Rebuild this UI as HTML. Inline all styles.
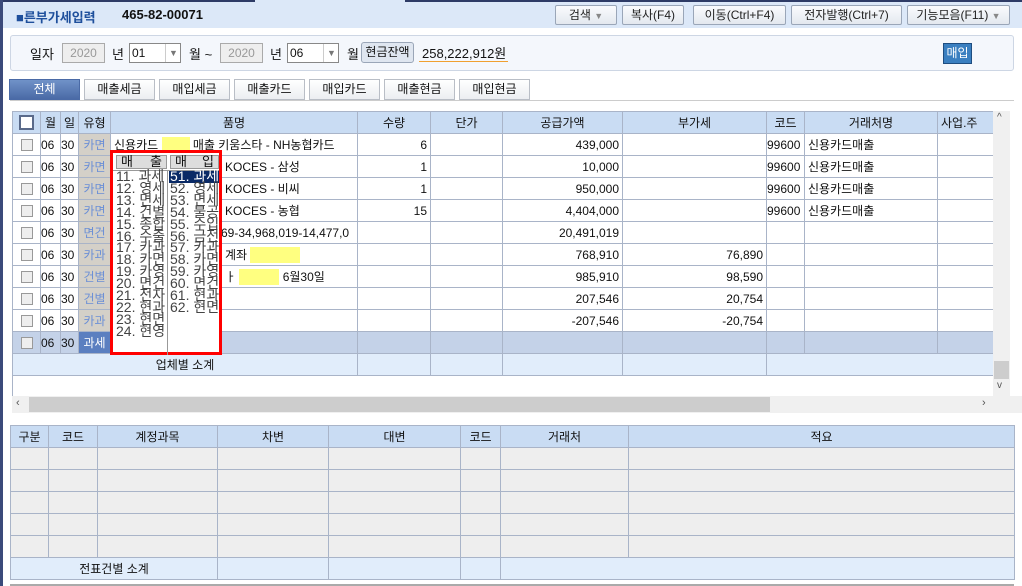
<!DOCTYPE html>
<html><head><meta charset="utf-8"><style>
*{box-sizing:border-box;margin:0;padding:0}
body{width:1022px;height:586px;overflow:hidden;background:#fff;font-family:"Liberation Sans","Noto Sans CJK KR",sans-serif;font-size:12px;color:#111;position:relative}
.a{position:absolute}
.btn{position:absolute;top:5px;height:20px;border:1px solid #9aa6b8;border-radius:2px;background:linear-gradient(#fafbfd,#e3e8ef);font-size:12px;line-height:18px;text-align:center;color:#222}
.tab{position:absolute;top:79px;height:21px;border:1px solid #b9bec6;background:linear-gradient(#fff,#eceef1);text-align:center;line-height:19px;font-size:12px}
table{border-collapse:collapse;table-layout:fixed;position:absolute}
td{border:1px solid #a9b4c8;height:22px;padding:0 3px;white-space:nowrap;overflow:hidden;font-size:12px}
.h td{background:#c9dcf3;text-align:center}
.r{text-align:right}
.ty{background:#d4d0c8;color:#6b8fd6;text-align:center;padding:0}
.cb{display:inline-block;width:12px;height:12px;border:1px solid #999;background:#eee;vertical-align:middle}
.sel td{background:#c4d2e8}
.sub td{background:#e1edfb}
.g td{background:#eee}
.yl{display:inline-block;background:#ffff80;height:16px;vertical-align:middle}
</style></head><body>
<div class="a" style="left:0;top:0;width:1022px;height:28px;background:#dce8f8"></div>
<div class="a" style="left:0;top:0;width:255px;height:2px;background:#2e3b66"></div>
<div class="a" style="left:405px;top:0;width:617px;height:2px;background:#2e3b66"></div>
<div class="a" style="left:0;top:0;width:3px;height:586px;background:#3b4a7a"></div>
<div class="a" style="left:16px;top:7px;font-weight:bold;color:#1e4f9c;font-size:13px">■른부가세입력</div>
<div class="a" style="left:122px;top:7px;font-weight:bold;font-size:13px">465-82-00071</div>
<div class="btn" style="left:555px;width:62px">검색 <span style="color:#888;font-size:9px">▼</span></div>
<div class="btn" style="left:622px;width:62px">복사(F4)</div>
<div class="btn" style="left:693px;width:93px">이동(Ctrl+F4)</div>
<div class="btn" style="left:791px;width:111px">전자발행(Ctrl+7)</div>
<div class="btn" style="left:907px;width:103px">기능모음(F11) <span style="color:#888;font-size:9px">▼</span></div>

<div class="a" style="left:10px;top:35px;width:1004px;height:36px;border:1px solid #cdd6e4;border-radius:3px;background:#f4f7fc"></div>
<div class="a" style="left:30px;top:44px;font-size:13px">일자</div>
<div class="a" style="left:62px;top:43px;width:43px;height:20px;border:1px solid #aaa;background:#eee;color:#999;text-align:center;line-height:18px">2020</div>
<div class="a" style="left:112px;top:44px;font-size:13px">년</div>
<div class="a" style="left:129px;top:43px;width:52px;height:20px;border:1px solid #888;background:#fff;line-height:18px;padding-left:2px">01<span style="position:absolute;left:35px;top:0;width:16px;height:18px;border-left:1px solid #ccc;color:#777;font-size:9px;text-align:center">▼</span></div>
<div class="a" style="left:189px;top:44px;font-size:13px">월 ~</div>
<div class="a" style="left:220px;top:43px;width:43px;height:20px;border:1px solid #aaa;background:#eee;color:#999;text-align:center;line-height:18px">2020</div>
<div class="a" style="left:270px;top:44px;font-size:13px">년</div>
<div class="a" style="left:287px;top:43px;width:52px;height:20px;border:1px solid #888;background:#fff;line-height:18px;padding-left:2px">06<span style="position:absolute;left:35px;top:0;width:16px;height:18px;border-left:1px solid #ccc;color:#777;font-size:9px;text-align:center">▼</span></div>
<div class="a" style="left:347px;top:44px;font-size:13px">월</div>
<div class="a" style="left:361px;top:42px;width:53px;height:21px;border:1px solid #9aa6b8;border-radius:3px;background:#dfe6f0;text-align:center;line-height:19px">현금잔액</div>
<div class="a" style="left:419px;top:43px;width:89px;height:19px;border-bottom:1px solid #f0a030;font-size:13px;padding-left:3px">258,222,912원</div>
<div class="a" style="left:943px;top:43px;width:29px;height:21px;background:#3a7fc0;border:1px solid #1e4d80;color:#fff;text-align:center;line-height:19px">매입</div>

<div class="tab" style="left:9px;width:71px;background:linear-gradient(#7092c8,#4a6aa6);color:#fff;border-color:#4a6aa6">전체</div>
<div class="tab" style="left:84px;width:71px">매출세금</div>
<div class="tab" style="left:159px;width:71px">매입세금</div>
<div class="tab" style="left:234px;width:71px">매출카드</div>
<div class="tab" style="left:309px;width:71px">매입카드</div>
<div class="tab" style="left:384px;width:71px">매출현금</div>
<div class="tab" style="left:459px;width:71px">매입현금</div>
<div class="a" style="left:10px;top:100px;width:1004px;height:1px;background:#ccc"></div>

<table style="left:12px;top:111px;width:981px">
<colgroup><col style="width:28px"><col style="width:20px"><col style="width:18px"><col style="width:32px"><col style="width:247px"><col style="width:73px"><col style="width:72px"><col style="width:120px"><col style="width:144px"><col style="width:38px"><col style="width:133px"><col style="width:56px"></colgroup>
<tr class="h"><td><span class="cb" style="width:15px;height:15px;border:2px solid #5a6a8a;background:#fff"></span></td><td style="padding:0">월</td><td style="padding:0">일</td><td style="padding:0">유형</td><td>품명</td><td>수량</td><td>단가</td><td>공급가액</td><td>부가세</td><td>코드</td><td>거래처명</td><td style="text-align:left">사업.주</td></tr>
<tr><td style="text-align:center"><span class="cb"></span></td><td style="padding:0">06</td><td style="padding:0">30</td><td class="ty">카면</td><td>신용카드 <span class="yl" style="width:28px"></span> 매출 키움스타 - NH농협카드</td><td class="r">6</td><td></td><td class="r">439,000</td><td></td><td style="padding:0">99600</td><td>신용카드매출</td><td></td></tr>
<tr><td style="text-align:center"><span class="cb"></span></td><td style="padding:0">06</td><td style="padding:0">30</td><td class="ty">카면</td><td style="padding-left:114px">KOCES - 삼성</td><td class="r">1</td><td></td><td class="r">10,000</td><td></td><td style="padding:0">99600</td><td>신용카드매출</td><td></td></tr>
<tr><td style="text-align:center"><span class="cb"></span></td><td style="padding:0">06</td><td style="padding:0">30</td><td class="ty">카면</td><td style="padding-left:114px">KOCES - 비씨</td><td class="r">1</td><td></td><td class="r">950,000</td><td></td><td style="padding:0">99600</td><td>신용카드매출</td><td></td></tr>
<tr><td style="text-align:center"><span class="cb"></span></td><td style="padding:0">06</td><td style="padding:0">30</td><td class="ty">카면</td><td style="padding-left:114px">KOCES - 농협</td><td class="r">15</td><td></td><td class="r">4,404,000</td><td></td><td style="padding:0">99600</td><td>신용카드매출</td><td></td></tr>
<tr><td style="text-align:center"><span class="cb"></span></td><td style="padding:0">06</td><td style="padding:0">30</td><td class="ty">면건</td><td style="padding-left:110px">69-34,968,019-14,477,0</td><td></td><td></td><td class="r">20,491,019</td><td></td><td></td><td></td><td></td></tr>
<tr><td style="text-align:center"><span class="cb"></span></td><td style="padding:0">06</td><td style="padding:0">30</td><td class="ty">카과</td><td style="padding-left:114px">계좌 <span class="yl" style="width:50px"></span></td><td></td><td></td><td class="r">768,910</td><td class="r">76,890</td><td></td><td></td><td></td></tr>
<tr><td style="text-align:center"><span class="cb"></span></td><td style="padding:0">06</td><td style="padding:0">30</td><td class="ty">건별</td><td style="padding-left:114px">ㅏ <span class="yl" style="width:40px"></span> 6월30일</td><td></td><td></td><td class="r">985,910</td><td class="r">98,590</td><td></td><td></td><td></td></tr>
<tr><td style="text-align:center"><span class="cb"></span></td><td style="padding:0">06</td><td style="padding:0">30</td><td class="ty">건별</td><td></td><td></td><td></td><td class="r">207,546</td><td class="r">20,754</td><td></td><td></td><td></td></tr>
<tr><td style="text-align:center"><span class="cb"></span></td><td style="padding:0">06</td><td style="padding:0">30</td><td class="ty">카과</td><td></td><td></td><td></td><td class="r">-207,546</td><td class="r">-20,754</td><td></td><td></td><td></td></tr>
<tr class="sel"><td style="text-align:center"><span class="cb"></span></td><td style="padding:0">06</td><td style="padding:0">30</td><td style="background:#5b7fc0;color:#fff;padding:0;text-align:center">과세</td><td></td><td></td><td></td><td></td><td></td><td></td><td></td><td></td></tr>
<tr class="sub"><td colspan="5" style="text-align:center">업체별 소계</td><td></td><td></td><td></td><td></td><td colspan="3"></td></tr>
</table>
<div class="a" style="left:12px;top:375px;width:1px;height:22px;background:#a9b4c8"></div>
<div class="a" style="left:993px;top:111px;width:17px;height:286px;background:#f0f0f0"></div>
<div class="a" style="left:994px;top:361px;width:15px;height:18px;background:#cdcdcd"></div>
<div class="a" style="left:997px;top:112px;font-size:10px;color:#555">^</div>
<div class="a" style="left:997px;top:380px;font-size:10px;color:#555">v</div>
<div class="a" style="left:12px;top:396px;width:1010px;height:17px;background:#f0f0f0"></div>
<div class="a" style="left:29px;top:397px;width:741px;height:15px;background:#cdcdcd"></div>
<div class="a" style="left:16px;top:397px;font-size:11px;color:#555">‹</div>
<div class="a" style="left:982px;top:397px;font-size:11px;color:#555">›</div>

<div class="a" style="left:110px;top:150px;width:112px;height:205px;border:3px solid #f00;background:#fff">
 <div class="a" style="left:3px;top:2px;width:51px;height:14px;border:1px solid #999;background:#ddd;font-size:13px;line-height:12px;padding:0 4px;display:flex;justify-content:space-between"><span>매</span><span>출</span></div>
 <div class="a" style="left:57px;top:2px;width:49px;height:14px;border:1px solid #999;background:#ddd;font-size:13px;line-height:12px;padding:0 4px;display:flex;justify-content:space-between"><span>매</span><span>입</span></div>
 <div class="a" style="left:54px;top:17px;width:1px;height:185px;background:#999"></div>
 <div class="a" style="left:0;top:17px;width:106px;height:1px;background:#999"></div>
 <div class="a" style="left:3px;top:18px;width:50px;font-size:14px;line-height:11.9px;color:#444;white-space:pre">11. 과세
12. 영세
13. 면세
14. 건별
15. 종합
16. 수출
17. 카과
18. 카면
19. 카영
20. 면건
21. 전자
22. 현과
23. 현면
24. 현영</div>
 <div class="a" style="left:56px;top:18px;width:50px;height:12px;background:#0a2a66"></div>
 <div class="a" style="left:57px;top:18px;width:50px;font-size:14px;line-height:11.9px;color:#444;white-space:pre"><span style="color:#fff">51. 과세</span>
52. 영세
53. 면세
54. 불공
55. 수입
56. 금전
57. 카과
58. 카면
59. 카영
60. 면건
61. 현과
62. 현면</div>
</div>

<table style="left:10px;top:425px;width:1004px">
<colgroup><col style="width:38px"><col style="width:49px"><col style="width:120px"><col style="width:111px"><col style="width:132px"><col style="width:40px"><col style="width:128px"><col style="width:386px"></colgroup>
<tr class="h"><td>구분</td><td>코드</td><td>계정과목</td><td>차변</td><td>대변</td><td style="padding:0">코드</td><td>거래처</td><td>적요</td></tr>
<tr class="g"><td></td><td></td><td></td><td></td><td></td><td></td><td></td><td></td></tr>
<tr class="g"><td></td><td></td><td></td><td></td><td></td><td></td><td></td><td></td></tr>
<tr class="g"><td></td><td></td><td></td><td></td><td></td><td></td><td></td><td></td></tr>
<tr class="g"><td></td><td></td><td></td><td></td><td></td><td></td><td></td><td></td></tr>
<tr class="g"><td></td><td></td><td></td><td></td><td></td><td></td><td></td><td></td></tr>
<tr class="sub"><td colspan="3" style="text-align:center">전표건별 소계</td><td></td><td></td><td></td><td colspan="2"></td></tr>
</table>
<div class="a" style="left:10px;top:584px;width:1004px;height:2px;background:#aaa"></div>
</body></html>
